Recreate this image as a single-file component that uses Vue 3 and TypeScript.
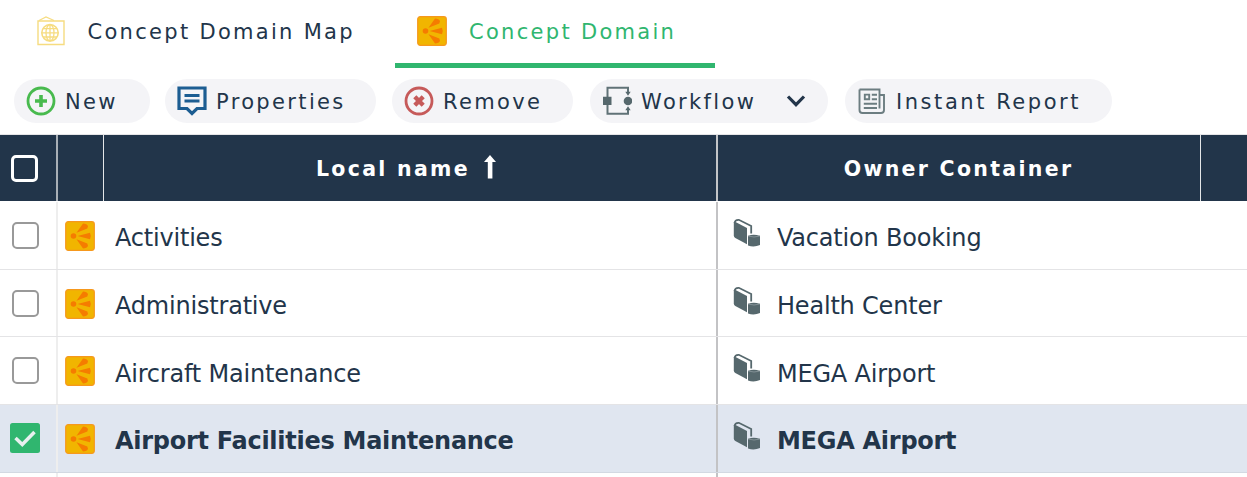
<script setup lang="ts">
interface Row {
  name: string
  owner: string
  selected: boolean
}

const rows: Row[] = [
  { name: 'Activities', owner: 'Vacation Booking', selected: false },
  { name: 'Administrative', owner: 'Health Center', selected: false },
  { name: 'Aircraft Maintenance', owner: 'MEGA Airport', selected: false },
  { name: 'Airport Facilities Maintenance', owner: 'MEGA Airport', selected: true },
]
</script>

<template>
  <svg class="defs" width="0" height="0">
    <symbol id="concept" viewBox="0 0 30 30">
      <rect x="0.7" y="0.7" width="28.6" height="28.6" rx="2.5" fill="#f1b500" stroke="#f6981d" stroke-width="1.2" />
      <g fill="#f57c00">
        <circle cx="8.5" cy="15" r="2.8" />
        <path d="M11.5 11.8 L18 2.5 Q22 2.5 23 5.2 L22.3 7.5 Z M12.5 15 L25 11.8 Q26.5 15 25 18.2 Z M11.5 18.2 L22.3 22.5 L23 24.8 Q22 27.5 18 27.5 Z" />
      </g>
    </symbol>
    <symbol id="library" viewBox="0 0 28 30">
      <path d="M0.8 4 L3 4.3 L14 10 V26.3 L2.3 20 Q0.8 19 0.8 17.5 Z" fill="#56686d" />
      <path d="M1.6 5 Q2 1.6 5.8 1.8 L18.2 8 V15.5" fill="none" stroke="#56686d" stroke-width="1.8" />
      <path d="M15 18 Q20.5 15.7 27 18 V27 Q21 29.7 15 27.5 Z" fill="#56686d" />
      <path d="M15 18 Q21 20 27 18" fill="none" stroke="#829095" stroke-width="1" />
    </symbol>
  </svg>

  <div class="page">
    <nav class="tabs">
      <div class="tab map">
        <svg class="map-icon" width="28" height="30" viewBox="0 0 28 30" fill="none" stroke="#f6dc80">
          <path d="M1 5 H27 V28.5 H1 Z" stroke-width="1.4" />
          <path d="M2 4.5 L9 1 L17 4.5" stroke-width="1.2" />
          <circle cx="13" cy="16.8" r="8.2" stroke-width="1.6" />
          <ellipse cx="13" cy="16.8" rx="4" ry="8.2" stroke-width="1.3" />
          <path d="M13 8.6 V25 M4.8 16.8 H21.2 M6 12.6 H20 M6 21 H20" stroke-width="1.3" />
        </svg>
        <span>Concept Domain Map</span>
      </div>
      <div class="tab active">
        <svg class="icon"><use href="#concept" /></svg>
        <span>Concept Domain</span>
      </div>
    </nav>

    <div class="toolbar">
      <button class="new">
        <svg width="30" height="30" viewBox="0 0 30 30" fill="none" stroke="#48ba4e">
          <circle cx="15" cy="15" r="13" stroke-width="2.8" />
          <path d="M15 9 V21 M9 15 H21" stroke-width="3.6" />
        </svg>
        <span>New</span>
      </button>
      <button class="properties">
        <svg width="30" height="30" viewBox="0 0 30 30" fill="none" stroke="#1c5d92">
          <path d="M2 2 H28 V22.5 H20 L15 27.5 L10 22.5 H2 Z" stroke-width="3.2" />
          <path d="M7.5 9.5 H22.5 M7.5 15 H22.5" stroke-width="2.8" />
        </svg>
        <span>Properties</span>
      </button>
      <button class="remove">
        <svg width="30" height="30" viewBox="0 0 30 30" fill="none" stroke="#c65a5a">
          <circle cx="15" cy="15" r="13" stroke-width="2.8" />
          <path d="M10.8 10.8 L19.2 19.2 M19.2 10.8 L10.8 19.2" stroke-width="4.4" />
        </svg>
        <span>Remove</span>
      </button>
      <button class="workflow">
        <svg width="30" height="30" viewBox="0 0 30 30" fill="none" stroke="#607277">
          <path d="M5.5 12 V1.8 H26 V7 M5.5 18 V27.8 H26 V23" stroke-width="2" />
          <path d="M1 10.7 H9.5 V19 H1 Z M23.3 5.8 H28.7 L26 9.8 Z M23.3 24.2 H28.7 L26 20.2 Z" fill="#56686d" stroke="none" />
          <circle cx="26" cy="15" r="4.3" fill="#56686d" stroke="none" />
        </svg>
        <span>Workflow</span>
        <svg class="chevron" width="20" height="14" viewBox="0 0 20 14">
          <path d="M2 2.5 L10 10.7 L18 2.5" fill="none" stroke="#22354a" stroke-width="3.2" />
        </svg>
      </button>
      <button class="report">
        <svg width="30" height="30" viewBox="0 0 30 30" fill="none" stroke="#6c7d81" stroke-width="1.9">
          <path d="M2.5 3.5 H22.5 V22.5 M2.5 3.5 V24 Q2.5 27 5.5 27 H24 Q27 27 27 24 V9 H23" />
          <path d="M7.8 8.6 H12.2 V13.3 H7.8 Z M14.8 8.7 H20 M14.8 13.2 H20 M6.8 17.7 H20 M6.8 22 H20" />
        </svg>
        <span>Instant Report</span>
      </button>
    </div>

    <div class="grid">
      <div class="row head">
        <div class="cell check"><i class="box" /></div>
        <div class="cell type" />
        <div class="cell name">
          <span>Local name</span>
          <svg class="sort" width="14" height="26" viewBox="0 0 14 26">
            <path d="M7 1 L13 8 H9.4 V24.5 H4.8 V8 H1 Z" fill="#fff" />
          </svg>
        </div>
        <div class="cell owner"><span>Owner Container</span></div>
        <div class="cell rest" />
      </div>
      <div class="rows">
        <div v-for="row in rows" :key="row.name" class="row body" :class="{ selected: row.selected }">
          <div class="cell check">
            <svg v-if="row.selected" class="checked" width="30" height="30" viewBox="0 0 30 30">
              <rect width="30" height="30" rx="2.5" fill="#30b66f" />
              <path d="M5.5 15 L12.3 21.5 L24.5 9" fill="none" stroke="#e8f0ef" stroke-width="3.5" />
            </svg>
            <i v-else class="box" />
          </div>
          <div class="cell type"><svg class="icon"><use href="#concept" /></svg></div>
          <div class="cell name"><span>{{ row.name }}</span></div>
          <div class="cell owner">
            <svg class="library"><use href="#library" /></svg>
            <span>{{ row.owner }}</span>
          </div>
          <div class="cell rest" />
        </div>
        <div class="row tail">
          <div class="cell check" />
          <div class="cell type" />
          <div class="cell name" />
          <div class="cell owner" />
        </div>
      </div>
    </div>
  </div>
</template>

<style>
body {
  margin: 0;
  overflow: hidden;
  background: #fff;
}
</style>

<style scoped>
.defs { position: absolute; }
.page {
  box-sizing: border-box;
  width: 1247px;
  height: 477px;
  overflow: hidden;
  color: #22354a;
  font-family: "DejaVu Sans", Verdana, sans-serif;
  white-space: nowrap;
}
svg { flex: none; display: block; }
.icon { width: 30px; height: 30px; }
.tabs { display: flex; height: 68px; }
.tab {
  box-sizing: border-box;
  display: flex;
  align-items: center;
  height: 68px;
  padding-bottom: 6px;
  font-size: 21px;
  letter-spacing: 2.3px;
}
.tab span { padding-top: 2px; }
.map { width: 395px; padding-left: 37px; }
.map-icon { margin-right: 22.5px; }
.active {
  width: 320px;
  padding: 0 0 1px 22px;
  border-bottom: 5px solid #30b66f;
  color: #30b66f;
}
.active .icon { margin-right: 22px; }
.toolbar {
  display: flex;
  height: 66px;
  padding: 11px 0 0 14px;
  box-sizing: border-box;
}
button {
  display: flex;
  align-items: center;
  box-sizing: border-box;
  height: 44px;
  padding: 0 0 0 12px;
  border: 0;
  border-radius: 22px;
  background: #f4f4f7;
  color: inherit;
  font: 21px "DejaVu Sans", Verdana, sans-serif;
  letter-spacing: 2.35px;
}
button span { margin-left: 9px; padding-top: 1px; }
.new { width: 136px; margin-right: 15px; }
.properties { width: 211px; margin-right: 16px; }
.remove { width: 181px; margin-right: 17px; }
.workflow { width: 238px; margin-right: 17px; }
.report { width: 267px; letter-spacing: 2.55px; }
.chevron { margin-left: auto; margin-right: 22px; }
.grid { border-top: 1px solid #e5e5e7; }
.row {
  display: grid;
  grid-template-columns: 58px 46px 614px 483px 1fr;
}
.cell {
  display: flex;
  align-items: center;
  box-sizing: border-box;
}
.head {
  height: 66px;
  background: #22354a;
  color: #fff;
  font-size: 20.5px;
  font-weight: bold;
  letter-spacing: 2.3px;
}
.head .cell { border-right: 1px solid #e4e6e8; }
.head .check { border-right: 2px solid #a8afb6; padding-left: 11px; }
.head .name { border-right: 2px solid #c3c5c8; padding-right: 7px; }
.head .rest { border: 0; }
.head .name, .head .owner { justify-content: center; }
.head .owner { padding-right: 1px; }
.head span { padding-top: 2px; }
.sort { margin: -3px 0 0 13px; }
.box {
  box-sizing: border-box;
  width: 27px;
  height: 27px;
  border: 2px solid #999;
  border-radius: 5px;
}
.head .box { border: 3px solid #fff; }
.rows { padding-top: 1px; }
.body {
  box-sizing: border-box;
  height: 67.7px;
  border-bottom: 1px solid #e4e4e6;
  font-size: 24px;
  letter-spacing: -0.2px;
}
.body .check, .tail .check { border-right: 2px solid #eee; }
.body .check { padding-left: 12px; }
.body .type { padding: 1px 0 0 7px; }
.body .name, .tail .name { border-right: 2px solid #c3c3c5; }
.body .name { padding: 6px 0 0 11px; }
.body .owner { padding-left: 15px; }
.body .owner span { padding-top: 6px; }
.library { width: 28px; height: 30px; margin: -5px 16px 0 0; }
.selected {
  background: #e0e6f0;
  border-bottom-color: #d3d9e2;
  font-weight: bold;
  letter-spacing: -0.27px;
}
.selected .check { padding-left: 10px; }
.tail { height: 10px; }
</style>
